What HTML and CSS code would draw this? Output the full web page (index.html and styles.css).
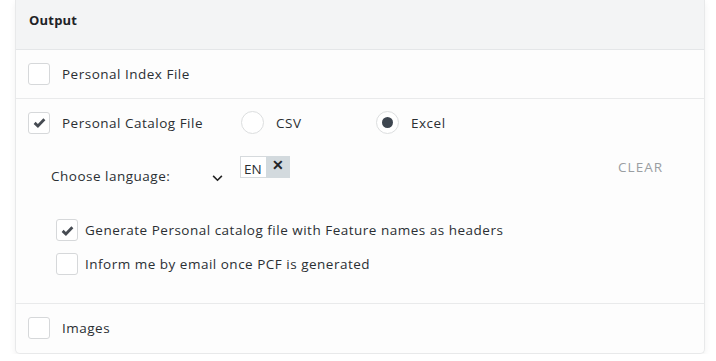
FILE: index.html
```html
<!DOCTYPE html>
<html lang="en">
<head>
    <meta charset="UTF-8">
    <title>Output</title>
    <link rel="stylesheet" href="styles.css">
</head>
<body class="page">
    <section class="card">
        <header class="card__header">Output</header>

        <div class="card__row">
            <label class="check">
                <span class="check__box"></span>
                <span class="check__label">Personal Index File</span>
            </label>
        </div>

        <div class="card__row card__row--catalog">
            <div class="catalog__main">
                <label class="check">
                    <span class="check__box check__box--on">
                        <svg viewBox="0 0 16 16" width="15" height="15"><path d="M2.8 8.4 L6.3 11.8 L13.2 4.6" fill="none" stroke="#464b52" stroke-width="3"/></svg>
                    </span>
                    <span class="check__label">Personal Catalog File</span>
                </label>
                <label class="radio radio--csv">
                    <span class="radio__dot"></span>
                    <span>CSV</span>
                </label>
                <label class="radio">
                    <span class="radio__dot radio__dot--on"></span>
                    <span>Excel</span>
                </label>
            </div>

            <div class="lang">
                <span class="lang__label">Choose language:</span>
                <svg class="lang__chevron" viewBox="0 0 12 8" width="11" height="7"><path d="M1 1 L6 6 L11 1" fill="none" stroke="#222" stroke-width="1.8"/></svg>
                <span class="tag">
                    <span class="tag__text">EN</span>
                    <span class="tag__x">✕</span>
                </span>
                <span class="lang__clear">CLEAR</span>
            </div>

            <div class="options">
                <label class="check">
                    <span class="check__box check__box--on">
                        <svg viewBox="0 0 16 16" width="15" height="15"><path d="M2.8 8.4 L6.3 11.8 L13.2 4.6" fill="none" stroke="#464b52" stroke-width="3"/></svg>
                    </span>
                    <span class="check__label check__label--tight">Generate Personal catalog file with Feature names as headers</span>
                </label>
                <label class="check">
                    <span class="check__box"></span>
                    <span class="check__label check__label--tight">Inform me by email once PCF is generated</span>
                </label>
            </div>
        </div>

        <div class="card__row">
            <label class="check">
                <span class="check__box"></span>
                <span class="check__label">Images</span>
            </label>
        </div>
    </section>
</body>
</html>
```

FILE: styles.css
```css
* {
    padding: 0;
    margin: 0;
    box-sizing: border-box;
}

/* Pagina */
.page {
    background-color: #ffffff;
    font-family: "Open Sans", "Liberation Sans", sans-serif;
    font-size: 13.5px;
    letter-spacing: 0.5px;
    color: #2b2f33;
    padding: 0 12px 0 15px;
}

/* Tarjeta */
.card {
    width: 690px;
    background-color: #fdfdfd;
    border: 1px solid #e8e9ea;
    border-top: none;
    border-radius: 0 0 5px 5px;
    box-shadow: 0 3px 6px rgba(0, 0, 0, 0.06);
}

.card__header {
    height: 50px;
    padding: 11px 13px 0;
    background-color: #f3f4f5;
    border-bottom: 1px solid #e4e6e8;
    font-weight: 700;
    font-size: 13px;
    letter-spacing: 0.2px;
    color: #1f2327;
}

.card__row {
    display: flex;
    flex-direction: column;
    padding: 13px 12px 12px;
    border-bottom: 1px solid #e9eaeb;
    min-height: 49px;
}

.card__row:last-child {
    border-bottom: none;
}

.card__row--catalog {
    padding: 12px 12px 25px;
    min-height: 205px;
}

/* Checkbox */
.check {
    display: flex;
    align-items: center;
    gap: 12px;
}

.check__box {
    width: 22px;
    height: 22px;
    flex: none;
    display: flex;
    align-items: center;
    justify-content: center;
    border: 1px solid #d6d8da;
    border-radius: 3px;
    background-color: #ffffff;
}

.check__label--tight {
    margin-left: -5px;
}

/* Radios */
.catalog__main {
    display: flex;
    align-items: center;
}

.radio {
    display: flex;
    align-items: center;
    gap: 12px;
}

.radio--csv {
    margin-left: 38px;
    width: 135px;
}

.radio__dot {
    width: 23px;
    height: 23px;
    border-radius: 50%;
    border: 1px solid #dcdedf;
    background-color: #ffffff;
    display: flex;
    align-items: center;
    justify-content: center;
}

.radio__dot--on::after {
    content: "";
    width: 11px;
    height: 11px;
    border-radius: 50%;
    background-color: #3e4650;
}

/* Idioma */
.lang {
    display: flex;
    align-items: flex-start;
    margin-top: 22px;
    padding-left: 23px;
}

.lang__label {
    margin-top: 11px;
    width: 161px;
}

.lang__chevron {
    margin-top: 19px;
    width: 11px;
}

.tag {
    display: flex;
    margin-left: 17px;
    height: 22px;
    letter-spacing: 0;
}

.tag__text {
    border: 1px solid #d6dadd;
    border-right: none;
    background-color: #ffffff;
    padding: 4px 4px 0 3px;
    line-height: 17px;
}

.tag__x {
    background-color: #d3dade;
    padding: 0 6px;
    font-weight: 700;
    font-size: 14px;
    line-height: 18px;
    color: #1f2327;
}

.lang__clear {
    margin-left: auto;
    margin-right: 29px;
    margin-top: 2px;
    color: #9a9ea2;
    letter-spacing: 1px;
}

/* Opciones extra */
.options {
    display: flex;
    flex-direction: column;
    gap: 12px;
    margin-top: 34px;
    padding-left: 28px;
}
```
